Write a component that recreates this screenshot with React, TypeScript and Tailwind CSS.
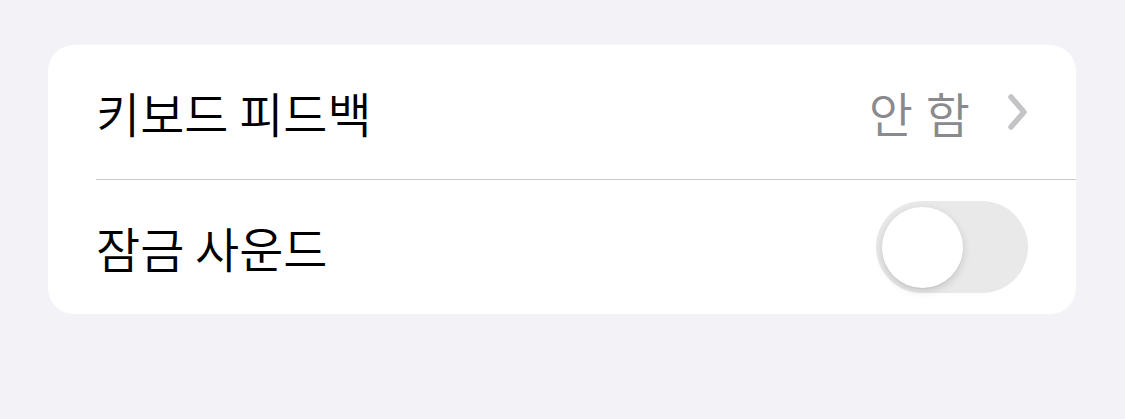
export default function App() {
  return (
    <div
      className="w-[1125px] h-[419px] bg-[#f2f2f7] pt-[45px] pl-[48px]"
      style={{ fontFamily: '"Noto Sans CJK KR", "Noto Sans", sans-serif' }}
    >
      <div className="w-[1028px] bg-white rounded-[26px] overflow-hidden">
        <div className="h-[134px] flex items-center pl-[48px] pr-[48px]">
          <span className="text-[48px] font-[350] text-black flex-1 leading-none">키보드 피드백</span>
          <span className="text-[48px] font-[350] text-[#8a8a8e] leading-none mr-[34px] flex gap-[13px]">
            <span>안</span>
            <span>함</span>
          </span>
          <svg width="24" height="38" viewBox="0 0 24 38">
            <path d="M7 4 L20 19 L7 34" fill="none" stroke="#c4c4c7" strokeWidth="5.5" strokeLinecap="round" strokeLinejoin="round" />
          </svg>
        </div>
        <div className="ml-[48px] h-px bg-[#c8c8cb]" />
        <div className="h-[134px] flex items-center pl-[48px] pr-[48px]">
          <span className="text-[48px] font-[350] text-black flex-1 leading-none">잠금 사운드</span>
          <div className="w-[152px] h-[92px] rounded-full bg-[#e9e9ea] p-[6px] flex items-center">
            <div className="w-[81px] h-[81px] rounded-full bg-white shadow-[0_3px_8px_rgba(0,0,0,0.15),0_1px_1px_rgba(0,0,0,0.06)]" />
          </div>
        </div>
      </div>
    </div>
  );
}
